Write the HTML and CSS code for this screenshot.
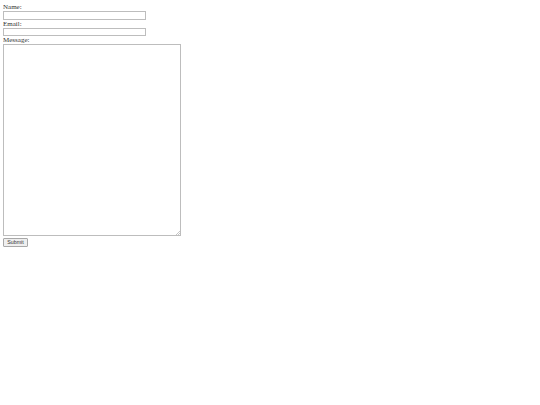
FILE: index.html
```html
<!DOCTYPE html>
<html>
<head>
<meta charset="utf-8">
<link rel="stylesheet" href="styles.css">
</head>
<body>
<form class="form">
  <label class="label" for="name">Name:</label>
  <input class="field" type="text" id="name">
  <label class="label" for="email">Email:</label>
  <input class="field" type="email" id="email">
  <label class="label" for="message">Message:</label>
  <div class="area-wrap">
    <textarea class="area" id="message"></textarea>
    <svg class="grip" width="4" height="4" viewBox="0 0 4 4"><path d="M4 0L0 4M4 2L2 4" stroke="#b8b8b8" stroke-width="0.8"/></svg>
  </div>
  <button class="btn" type="submit">Submit</button>
</form>
</body>
</html>
```
FILE: styles.css
```css
html, body {
  background: #ffffff;
}
body {
  margin: 3px;
  font-family: "Liberation Serif", "Times New Roman", serif;
  font-size: 7px;
  line-height: 8px;
  color: #333;
}
.form {
  display: flex;
  flex-direction: column;
  align-items: flex-start;
}
.label {
  display: block;
  height: 8px;
  line-height: 8px;
}
.field {
  display: block;
  box-sizing: border-box;
  width: 143px;
  height: 8.5px;
  margin: 0;
  padding: 0 1px;
  border: 1px solid #bdbdbd;
  border-radius: 0;
  background: #fff;
  font-size: 5px;
  outline: none;
}
.area-wrap {
  position: relative;
  width: 178px;
  height: 192px;
}
.area {
  display: block;
  box-sizing: border-box;
  width: 178px;
  height: 192px;
  margin: 0;
  padding: 1px;
  border: 1px solid #bdbdbd;
  border-radius: 0;
  background: #fff;
  font-size: 5px;
  resize: none;
}
.grip {
  position: absolute;
  right: 1px;
  bottom: 1px;
}
.btn {
  margin-top: 2px;
  box-sizing: border-box;
  width: 25px;
  height: 8.5px;
  padding: 0;
  border: 1px solid #a8a8a8;
  border-radius: 1px;
  background: #efefef;
  font-family: "Liberation Sans", Arial, sans-serif;
  font-size: 5.3px;
  line-height: 6px;
  color: #333;
}
```
